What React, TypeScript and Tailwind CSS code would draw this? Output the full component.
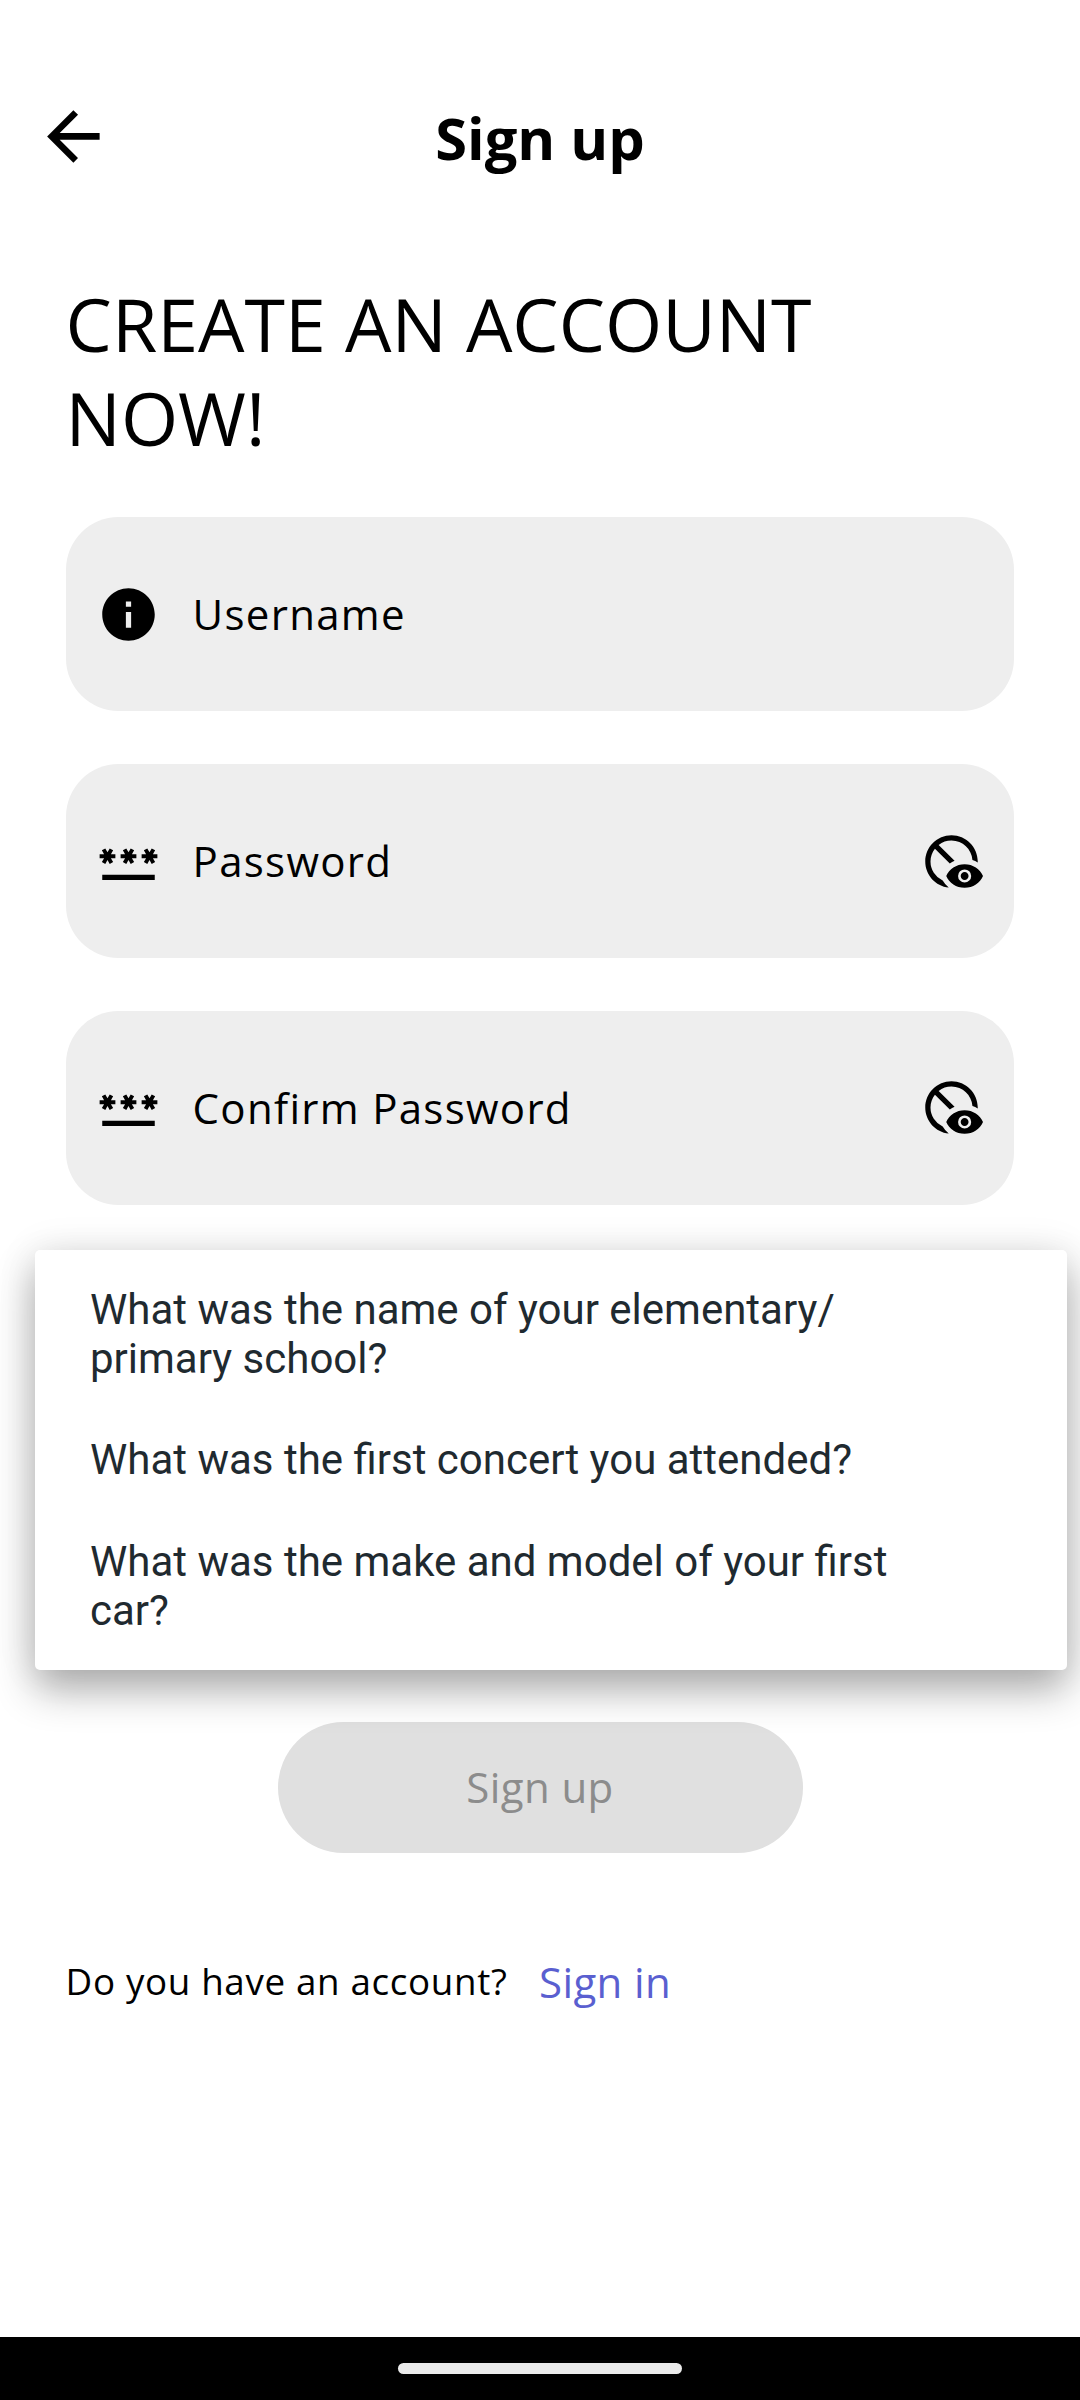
import type { IconType } from "react-icons";
import { MdArrowBack, MdDisabledVisible, MdInfo, MdPassword } from "react-icons/md";

function Field({ icon: Icon, label, secret }: { icon: IconType; label: string; secret?: boolean }) {
  return (
    <div className="flex h-[194.25px] items-center rounded-[52.5px] bg-[#eeeeee] px-[31.5px] text-black">
      <Icon className="size-[63px] shrink-0" />
      <span className="ml-[32.5px] flex-1 text-[42px] leading-[64px] tracking-[1.3px]">{label}</span>
      {secret && <MdDisabledVisible className="size-[63px] shrink-0" />}
    </div>
  );
}

const questions = [
  ["What was the name of your elementary/", "primary school?"],
  ["What was the first concert you attended?"],
  ["What was the make and model of your first", "car?"],
];

export default function App() {
  return (
    <div className="relative flex h-[2400px] w-[1080px] flex-col overflow-hidden bg-white font-['Open_Sans',sans-serif] text-black">
      <header className="mt-[63px] grid h-[147px] grid-cols-[1fr_auto_1fr] items-center px-[34px]">
        <MdArrowBack className="size-[78.75px]" />
        <h1 className="pt-[2px] text-[57.75px] leading-[80px] font-bold">Sign up</h1>
      </header>

      <main className="flex flex-1 flex-col px-[65.6px] pt-[67px]">
        <h2 className="text-[73.5px] leading-[94px]">
          CREATE AN ACCOUNT
          <br />
          NOW!
        </h2>

        <form className="mt-[52.15px] flex flex-col gap-[52.5px]">
          <Field icon={MdInfo} label="Username" />
          <Field icon={MdPassword} label="Password" secret />
          <Field icon={MdPassword} label="Confirm Password" secret />
        </form>

        <button className="mt-[517.25px] h-[131.25px] w-[525px] self-center rounded-full bg-[#e0e0e0] pb-[2px] text-[42px] leading-[64px] tracking-[0.4px] text-[#8c8c8c]">
          Sign up
        </button>

        <p className="mt-[96px] flex items-center gap-[31.5px]">
          <span className="pb-px text-[36.75px] leading-[64px] tracking-[0.66px]">Do you have an account?</span>
          <a className="text-[42px] leading-[64px] tracking-[0.4px] text-[#5a5fd0]">Sign in</a>
        </p>
      </main>

      <ul className="absolute top-[1250px] left-[35px] flex h-[420px] w-[1032px] flex-col gap-[52px] rounded-[5px] bg-white py-[35px] pl-[55px] font-['Roboto',sans-serif] text-[42px] leading-[49.2px] text-[#1f2a30] shadow-[0_20px_40px_rgba(0,0,0,0.31),0_1px_42px_rgba(0,0,0,0.09)]">
        {questions.map((lines) => (
          <li key={lines[0]}>
            {lines.map((line) => (
              <span key={line} className="block">
                {line}
              </span>
            ))}
          </li>
        ))}
      </ul>

      <nav className="flex h-[63px] items-center justify-center bg-black">
        <div className="h-[11px] w-[284px] rounded-full bg-[#ebebeb]" />
      </nav>
    </div>
  );
}
